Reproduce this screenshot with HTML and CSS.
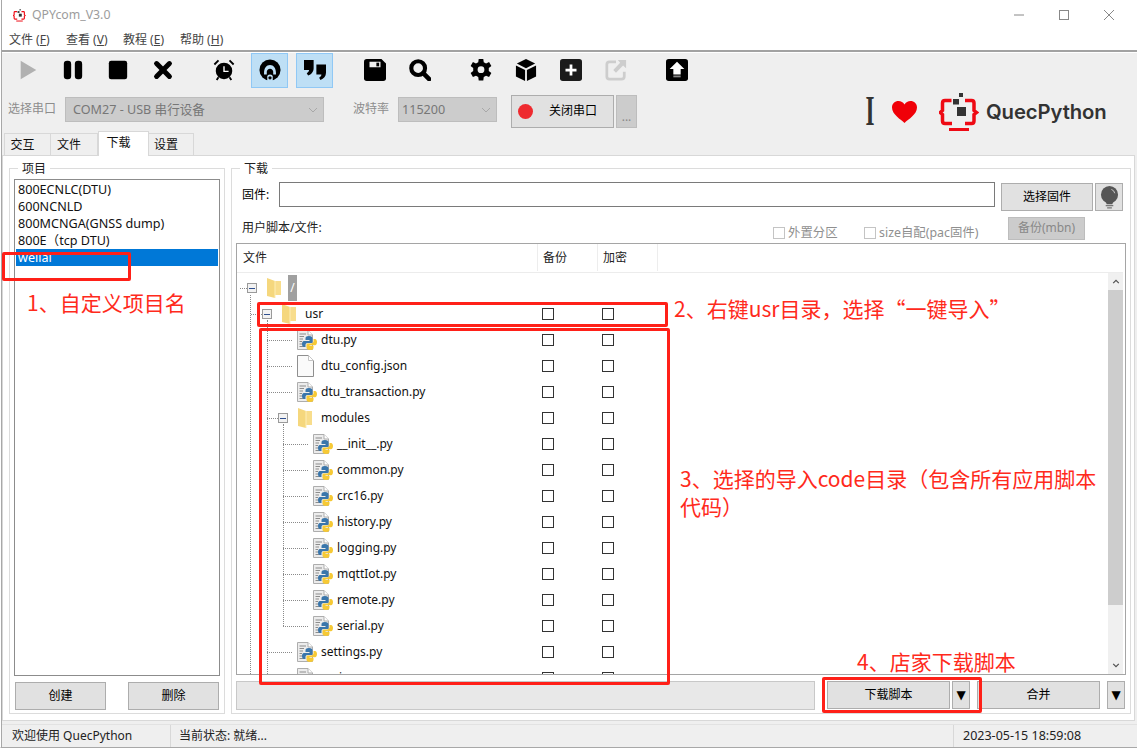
FILE: index.html
```html
<!DOCTYPE html>
<html lang="zh-CN">
<head>
<meta charset="utf-8">
<title>QPYcom_V3.0</title>
<link rel="stylesheet" href="styles.css">
</head>
<body>
<svg class="defs" width="0" height="0" aria-hidden="true">
  <symbol id="qp" viewBox="0 0 40 39">
    <path d="M12.500 7.500H6Q3.500 7.500 3.500 10V17.500L1.200 19.500L3.500 21.500V28Q3.500 30.500 6 30.500H13M26 7.500H32.500Q35 7.500 35 10V17.500L37.500 19.500L35 21.500V28Q35 30.500 32.500 30.500H26" fill="none" stroke="#ee0a14" stroke-width="3.500"/>
    <rect x="10" y="35" width="20" height="3" fill="#ee0a14"/>
    <rect x="14" y="6" width="6" height="5.500" fill="#333"/>
    <rect x="20" y="0" width="4" height="4" fill="#333"/>
    <rect x="18" y="14" width="9" height="9" fill="#333"/>
  </symbol>
  <symbol id="py" viewBox="0 0 20 20">
    <path d="M.5 .5H11L15.500 5V19.500H.5Z" fill="#ececec" stroke="#adadad"/>
    <path d="M11 .5V5H15.500" fill="#fff" stroke="#adadad"/>
    <path d="M2.500 4H9M2.500 6.500H7M2.500 9H6M2.500 11.500H5M2.500 14H5M2.500 16.500H8" stroke="#8c8c8c" stroke-width="1.200"/>
    <path d="M12 6C9 6 8.500 7 8.500 8.500V10H12.500V11H7C5.500 11 5 12.500 5 14C5 15.500 5.500 17 7 17H8.500V15C8.500 13.500 9.500 13 11 13H14C15 13 15.500 12.500 15.500 11.500V8.500C15.500 7 14.500 6 12 6Z" fill="#3a76ab"/>
    <path d="M13 20C16 20 16.500 19 16.500 17.500V16H12.500V15.300H18C19.300 15.300 20 13.500 20 12C20 10.500 19.300 9 18 9H16.500V11C16.500 12.500 15.500 13.500 14 13.500H11C10 13.500 9.500 14 9.500 15V17.500C9.500 19 10.500 20 13 20Z" fill="#f6c935"/>
  </symbol>
  <symbol id="doc" viewBox="0 0 17 22">
    <path d="M.5 .5H11.500L16.500 5.500V21.500H.5Z" fill="#fafafa" stroke="#8f8f8f"/>
    <path d="M11.500 .5V5.500H16.500" fill="#fff" stroke="#c4c4c4"/>
  </symbol>
  <symbol id="folder" viewBox="0 0 14 20">
    <path d="M5 3H14V17H5Z" fill="#f8dd8c"/>
    <path d="M0 0L8 3V20L0 18Z" fill="#f5d77d"/>
    <path d="M8 3V20" stroke="#fdeeb8"/>
  </symbol>
</svg>
<div class="window">
  <header class="titlebar">
    <svg class="title-logo"><use href="#qp"/></svg>
    <span class="title-text">QPYcom_V3.0</span>
    <div class="winctl">
      <svg class="winbtn" viewBox="0 0 12 12"><path d="M1 6H11" stroke="#888" fill="none"/></svg>
      <svg class="winbtn" viewBox="0 0 12 12"><rect x="1.500" y="1.500" width="9" height="9" stroke="#888" fill="none"/></svg>
      <svg class="winbtn" viewBox="0 0 12 12"><path d="M1 1L11 11M11 1L1 11" stroke="#888" fill="none"/></svg>
    </div>
  </header>
  <nav class="menubar">
    <span class="menu">文件 (<u>F</u>)</span>
    <span class="menu">查看 (<u>V</u>)</span>
    <span class="menu">教程 (<u>E</u>)</span>
    <span class="menu">帮助 (<u>H</u>)</span>
  </nav>
  <section class="topbar">
    <div class="tools">
      <span class="tool"><svg class="ico" viewBox="0 0 24 24"><path d="M4 2L21 12L4 22Z" fill="#b1b1b1"/></svg></span>
      <span class="tool"><svg class="ico" viewBox="0 0 24 24"><rect x="2" y="2" width="8" height="20" rx="3.500"/><rect x="14" y="2" width="8" height="20" rx="3.500"/></svg></span>
      <span class="tool"><svg class="ico" viewBox="0 0 24 24"><rect x="2" y="2" width="20" height="20" rx="2.500"/></svg></span>
      <span class="tool"><svg class="ico" viewBox="0 0 24 24"><path d="M5 5L19 19M19 5L5 19" stroke="#000" stroke-width="5.500" stroke-linecap="round"/></svg></span>
      <span class="tool sep"><svg class="ico" viewBox="0 0 24 24"><circle cx="12" cy="13" r="9"/><path d="M12 8V13.500H17" stroke="#fff" stroke-width="1.500" fill="none"/><path d="M1.500 6L6 1.500M22.500 6L18 1.500M6 20L4 23M18 20L20 23" stroke="#000" stroke-width="2"/></svg></span>
      <span class="tool on"><svg class="ico" viewBox="0 0 24 24"><circle cx="12" cy="12" r="11.500"/><path d="M5.500 15C5.500 10 8 6.500 12 6.500C16 6.500 18.500 10 18.500 15V17H15.500V14C15.500 12 14 10.500 12 10.500C10 10.500 8.500 12 8.500 14V17H5.500Z" fill="#bedff5"/><circle cx="12" cy="14" r="2.200"/><path d="M9 24V19Q9 17 12 17Q15 17 15 19V24Z" fill="#bedff5"/><circle cx="12" cy="20.500" r="1.800"/></svg></span>
      <span class="tool on"><svg class="ico" viewBox="0 0 24 24"><path d="M0 1H10.500V10C10.500 14 8 16.500 4.500 18L3 15.500C4.500 14.500 5.500 13.500 5.500 12H0Z"/><path d="M13.500 6H24V15C24 19 21.500 21.500 18 23L16.500 20.500C18 19.500 19 18.500 19 17H13.500Z"/></svg></span>
      <span class="tool sep"><svg class="ico" viewBox="0 0 24 24"><path d="M3 0H19L24 5V21Q24 24 21 24H3Q0 24 0 21V3Q0 0 3 0Z"/><rect x="6" y="3" width="12" height="6" fill="#efefef"/><rect x="13.500" y="4" width="3" height="4"/></svg></span>
      <span class="tool"><svg class="ico" viewBox="0 0 24 24"><circle cx="10" cy="10" r="7.500" fill="none" stroke="#000" stroke-width="4.500"/><path d="M15.500 15.500L22 22" stroke="#000" stroke-width="5" stroke-linecap="round"/></svg></span>
      <span class="tool sep"><svg class="ico" viewBox="0 0 24 24"><path d="M9.500 0H14.500L15 3.500L17.500 4.800L20.800 3.300L23.300 7.700L20.500 9.800V13.200L23.300 15.300L20.800 19.700L17.500 18.200L15 19.500L14.500 23.500H9.500L9 19.500L6.500 18.200L3.200 19.700L.7 15.300L3.500 13.200V9.800L.7 7.700L3.200 3.300L6.500 4.800L9 3.500Z" fill-rule="evenodd"/><circle cx="12" cy="11.700" r="3.700" fill="#efefef"/></svg></span>
      <span class="tool"><svg class="ico" viewBox="0 0 24 24"><path d="M12 0L22 5L12 10L2 5Z"/><path d="M1 7L11 12V24L1 19Z"/><path d="M23 7L13 12V24L23 19Z"/></svg></span>
      <span class="tool"><svg class="ico" viewBox="0 0 24 24"><rect width="24" height="24" rx="3" fill="#1b1b1b"/><path d="M12 6V18M6 12H18" stroke="#fff" stroke-width="3"/></svg></span>
      <span class="tool"><svg class="ico" viewBox="0 0 24 24"><path d="M12 3H5Q2 3 2 6V19Q2 22 5 22H18Q21 22 21 19V14" fill="none" stroke="#cdcdcd" stroke-width="3"/><path d="M14 1H23V10L19.700 7L12 15L9 12L16.500 4Z" fill="#cdcdcd"/></svg></span>
      <span class="tool sep"><svg class="ico" viewBox="0 0 24 24"><rect width="24" height="24" rx="3"/><path d="M12 3L20 11H16V17H8V11H4Z" fill="#fff"/><path d="M8 19H16" stroke="#888" stroke-width="2"/></svg></span>
    </div>
    <div class="serial">
      <span class="muted port-label">选择串口</span>
      <span class="combo combo-port">COM27 - USB 串行设备<svg class="chev" viewBox="0 0 10 6"><path d="M1 1L5 5L9 1" fill="none" stroke="#a8a8a8"/></svg></span>
      <span class="muted baud-label">波特率</span>
      <span class="combo combo-baud">115200<svg class="chev" viewBox="0 0 10 6"><path d="M1 1L5 5L9 1" fill="none" stroke="#a8a8a8"/></svg></span>
      <button class="btn-close"><span class="dot"></span>关闭串口</button>
      <span class="btn-more">...</span>
      <div class="brand">
        <span class="brand-i">I</span>
        <svg class="heart" viewBox="0 0 25 22"><path d="M12.500 22C9 18.500 0 13.500 0 6.500C0 2.500 3 0 6.500 0C9 0 11.300 1.300 12.500 3.500C13.700 1.300 16 0 18.500 0C22 0 25 2.500 25 6.500C25 13.500 16 18.500 12.500 22Z" fill="#f00008"/></svg>
        <svg class="brand-logo"><use href="#qp"/></svg>
        <span class="brand-name">QuecPython</span>
      </div>
    </div>
    <div class="tabs">
      <span class="tab t1">交互</span>
      <span class="tab t2">文件</span>
      <span class="tab t3 active">下载</span>
      <span class="tab t4">设置</span>
    </div>
  </section>
  <main class="pane">
    <section class="group group-project">
      <span class="legend">项目</span>
      <ul class="plist">
        <li>800ECNLC(DTU)</li>
        <li>600NCNLD</li>
        <li>800MCNGA(GNSS dump)</li>
        <li>800E（tcp DTU)</li>
        <li class="sel">weilai</li>
      </ul>
      <div class="pbtns">
        <button class="btn pbtn">创建</button>
        <button class="btn pbtn">删除</button>
      </div>
    </section>
    <section class="group group-download">
      <span class="legend">下载</span>
      <div class="fw-row">
        <label class="fw-label">固件:</label>
        <span class="fw-input"></span>
        <button class="btn fw-btn">选择固件</button>
        <span class="btn bulb"><svg class="bulb-ico" viewBox="0 0 20 24"><circle cx="10" cy="9" r="9" fill="#565656"/><path d="M6 16H14L13 19H7Z" fill="#565656"/><path d="M6 20.500H14M7.500 23H12.500" stroke="#777" stroke-width="1.300"/><path d="M12 3.500Q15 4.500 15.500 7.500" stroke="#ccc" fill="none"/></svg></span>
      </div>
      <div class="opt-row">
        <span class="opt-label">用户脚本/文件:</span>
        <span class="opt opt-a"><i class="optbox"></i>外置分区</span>
        <span class="opt opt-b"><i class="optbox"></i>size自配(pac固件)</span>
        <span class="btn-bak">备份(mbn)</span>
      </div>
      <div class="tree">
        <div class="tree-head">
          <span class="th th-name">文件</span><span class="th th-c">备份</span><span class="th th-c">加密</span>
        </div>
        <div class="tree-main">
          <div class="rows">
            <i class="vline v1"></i><i class="vline v2"></i><i class="vline v3"></i>
            <div class="row d0"><span class="cell"><i class="hl"></i><i class="box"></i><svg class="fo"><use href="#folder"/></svg><span class="rootsel">/</span></span></div>
            <div class="row d1"><span class="cell"><i class="hl"></i><i class="box"></i><svg class="fo"><use href="#folder"/></svg><span class="nm">usr</span></span><i class="cb"></i><i class="cb"></i></div>
            <div class="row d2"><span class="cell"><i class="hl"></i><svg class="pi"><use href="#py"/></svg><span class="nm">dtu.py</span></span><i class="cb"></i><i class="cb"></i></div>
            <div class="row d2"><span class="cell"><i class="hl"></i><svg class="pd"><use href="#doc"/></svg><span class="nm">dtu_config.json</span></span><i class="cb"></i><i class="cb"></i></div>
            <div class="row d2"><span class="cell"><i class="hl"></i><svg class="pi"><use href="#py"/></svg><span class="nm">dtu_transaction.py</span></span><i class="cb"></i><i class="cb"></i></div>
            <div class="row dm"><span class="cell"><i class="hl"></i><i class="box"></i><svg class="fo"><use href="#folder"/></svg><span class="nm">modules</span></span><i class="cb"></i><i class="cb"></i></div>
            <div class="row d3"><span class="cell"><i class="hl"></i><svg class="pi"><use href="#py"/></svg><span class="nm">__init__.py</span></span><i class="cb"></i><i class="cb"></i></div>
            <div class="row d3"><span class="cell"><i class="hl"></i><svg class="pi"><use href="#py"/></svg><span class="nm">common.py</span></span><i class="cb"></i><i class="cb"></i></div>
            <div class="row d3"><span class="cell"><i class="hl"></i><svg class="pi"><use href="#py"/></svg><span class="nm">crc16.py</span></span><i class="cb"></i><i class="cb"></i></div>
            <div class="row d3"><span class="cell"><i class="hl"></i><svg class="pi"><use href="#py"/></svg><span class="nm">history.py</span></span><i class="cb"></i><i class="cb"></i></div>
            <div class="row d3"><span class="cell"><i class="hl"></i><svg class="pi"><use href="#py"/></svg><span class="nm">logging.py</span></span><i class="cb"></i><i class="cb"></i></div>
            <div class="row d3"><span class="cell"><i class="hl"></i><svg class="pi"><use href="#py"/></svg><span class="nm">mqttIot.py</span></span><i class="cb"></i><i class="cb"></i></div>
            <div class="row d3"><span class="cell"><i class="hl"></i><svg class="pi"><use href="#py"/></svg><span class="nm">remote.py</span></span><i class="cb"></i><i class="cb"></i></div>
            <div class="row d3"><span class="cell"><i class="hl"></i><svg class="pi"><use href="#py"/></svg><span class="nm">serial.py</span></span><i class="cb"></i><i class="cb"></i></div>
            <div class="row d2"><span class="cell"><i class="hl"></i><svg class="pi"><use href="#py"/></svg><span class="nm">settings.py</span></span><i class="cb"></i><i class="cb"></i></div>
            <div class="row d2"><span class="cell"><i class="hl"></i><svg class="pi"><use href="#py"/></svg><span class="nm">main.py</span></span><i class="cb"></i><i class="cb"></i></div>
          </div>
          <div class="scroll">
            <svg class="sarrow" viewBox="0 0 10 6"><path d="M1.500 5L5 1.500L8.500 5" fill="none" stroke="#505050" stroke-width="1.500"/></svg>
            <span class="thumb"></span>
            <svg class="sarrow sdown" viewBox="0 0 10 6"><path d="M1.500 1L5 4.500L8.500 1" fill="none" stroke="#505050" stroke-width="1.500"/></svg>
          </div>
        </div>
      </div>
      <div class="act-row">
        <span class="progress"></span>
        <button class="btn act">下载脚本</button>
        <span class="btn drop">▼</span>
        <button class="btn act merge">合并</button>
        <span class="btn drop drop2">▼</span>
      </div>
    </section>
  </main>
  <footer class="status">
    <span class="st st1">欢迎使用 QuecPython</span>
    <span class="st st2">当前状态: 就绪...</span>
    <span class="st st3">2023-05-15 18:59:08</span>
  </footer>
  <i class="mark m1"></i>
  <i class="mark m2"></i>
  <i class="mark m3"></i>
  <i class="mark m4"></i>
  <span class="note n1">1、自定义项目名</span>
  <span class="note n2">2、右键usr目录，选择“一键导入”</span>
  <span class="note n3">3、选择的导入code目录（包含所有应用脚本<br>代码）</span>
  <span class="note n4">4、店家下载脚本</span>
</div>
</body>
</html>
```
FILE: styles.css
```css
* { box-sizing: border-box; }
html, body { margin: 0; padding: 0; }
body { width: 1137px; height: 748px; overflow: hidden; background: #fff; font: 12px/1.2 "Noto Sans", "Noto Sans CJK SC", sans-serif; color: #000; }
.defs { position: absolute; }
button { font: inherit; color: inherit; padding: 0; }

.window { position: relative; width: 1137px; height: 748px; margin: 0; border-left: 1px solid #fff; display: flex; flex-direction: column; border-bottom: 1px solid #a8a8a8; background: #efefef; overflow: hidden; box-shadow: inset 1px 0 0 #a8a8a8; }

.titlebar { height: 30px; background: #fff; display: flex; align-items: center; padding-left: 11px; margin-left: 1px; flex: none; }
.title-logo { width: 13px; height: 13px; }
.title-text { margin-left: 6px; color: #9c9c9c; font-size: 12.300px; }
.winctl { margin-left: auto; display: flex; gap: 33px; padding-right: 22px; }
.winbtn { width: 12px; height: 12px; display: block; }

.menubar { height: 22px; background: #fff; margin-left: 1px; border-bottom: 2px solid #a2a2a2; display: flex; padding-left: 7px; gap: 14px; flex: none; }
.menu { color: #444; line-height: 20px; white-space: nowrap; width: 43px; }

.topbar { height: 103px; flex: none; margin-left: 1px; position: relative; display: flex; flex-direction: column; border-top: 1px solid #fff; }
.tools { display: flex; height: 35px; padding-left: 7px; gap: 8px; flex: none; }
.tool { width: 37px; height: 35px; display: flex; align-items: center; justify-content: center; border: 1px solid transparent; flex: none; padding-bottom: 1px; }
.tool.sep { margin-left: 16px; }
.tool.on { background: #bedff5; border-color: #90c8f5; transform: translateX(1px); }
.ico { width: 22px; height: 22px; display: block; }

.serial { display: flex; align-items: center; height: 40px; margin-top: 4px; padding-left: 6px; flex: none; }
.muted { color: #8d8d8d; white-space: nowrap; margin-top: -5px; }
.port-label { width: 57px; }
.combo { height: 25px; margin-top: -5px; background: #ccc; border: 1px solid #bdbdbd; color: #777; display: flex; align-items: center; padding-left: 7px; position: relative; font-size: 12.600px; }
.combo-port { width: 259px; }
.baud-label { margin-left: 29px; width: 45px; }
.combo-baud { width: 99px; padding-left: 3px; }
.chev { width: 10px; height: 6px; position: absolute; right: 5px; top: 9px; }
.btn-close { width: 103px; height: 33px; margin-left: 14px; margin-top: -2px; background: #e1e1e1; border: 1px solid #adadad; display: flex; align-items: center; padding-left: 6px; gap: 16px; }
.dot { width: 15px; height: 15px; border-radius: 50%; background: #ee2a2f; flex: none; }
.btn-more { width: 21px; height: 33px; margin-left: 2px; margin-top: -2px; background: #ccc; border: 1px solid #bdbdbd; color: #888; text-align: center; padding-top: 14px; }
.brand { margin-left: auto; display: flex; align-items: center; width: 271px; flex: none; height: 40px; }
.brand-i { font: bold 42px/40px "Liberation Serif", serif; color: #333; width: 8px; display: flex; justify-content: center; transform: scaleX(.55); margin-top: -3px; }
.heart { width: 25px; height: 22px; margin-left: 18px; }
.brand-logo { width: 40px; height: 39px; margin-left: 22px; }
.brand-name { font: 600 20.300px/40px Inter, "Noto Sans", sans-serif; color: #333; margin-left: 7px; white-space: nowrap; letter-spacing: -.1px; }

.tabs { display: flex; align-items: flex-end; padding-left: 2px; height: 24px; margin-top: -1px; flex: none; }
.tab { height: 22px; line-height: 22px; text-align: center; border: 1px solid #d8d8d8; border-bottom: 0; border-left: 0; color: #111; padding-right: 10px; }
.t1 { width: 47px; border-left: 1px solid #d8d8d8; }
.t2 { width: 47px; }
.t3 { width: 51px; }
.t4 { width: 45px; }
.tab.active { height: 25px; background: #fff; margin-bottom: -1px; border-left: 1px solid #d8d8d8; position: relative; line-height: 22px; }

.pane { width: 1133px; height: 566px; margin-left: 1px; flex: none; background: #fff; border: 1px solid #d8d8d8; display: flex; padding: 12px 3px 6px 6px; gap: 6px; }
.group { border: 1px solid #dcdcdc; position: relative; display: flex; flex-direction: column; }
.legend { position: absolute; left: 8px; top: -7px; background: #fff; padding: 0 4px; line-height: 14px; color: #222; }
.group-project { width: 216px; flex: none; padding: 10px 4px 3px; }
.plist { flex: 1; margin: 0; padding: 1px 1px; list-style: none; border: 1px solid #8c8c8c; min-height: 0; }
.plist li { height: 17px; line-height: 17px; padding-left: 2px; white-space: nowrap; color: #111; font-size: 12.600px; }
.plist li.sel { background: #0078d7; color: #fff; }
.pbtns { display: flex; justify-content: space-between; margin: 6px 1px 0; }
.btn { background: #e1e1e1; border: 1px solid #adadad; display: flex; align-items: center; justify-content: center; }
.pbtn { width: 91px; height: 28px; }

.group-download { flex: 1; padding: 13px 4px 3px; min-width: 0; }
.fw-row { display: flex; align-items: flex-start; height: 29px; flex: none; padding-left: 6px; }
.fw-label { width: 37px; line-height: 25px; }
.fw-input { width: 716px; height: 25px; border: 1px solid #7a7a7a; background: #fff; }
.fw-btn { width: 92px; height: 28px; margin-left: 6px; margin-top: 1px; }
.bulb { width: 28px; height: 28px; margin-left: 2px; margin-top: 1px; }
.bulb-ico { width: 19px; height: 23px; }

.opt-row { display: flex; height: 32px; flex: none; padding-left: 6px; align-items: flex-start; }
.opt-label { width: 531px; margin-top: 10px; color: #222; white-space: nowrap; }
.opt { display: flex; align-items: center; color: #8f8f8f; white-space: nowrap; margin-top: 15px; gap: 3px; font-size: 12.400px; }
.opt-a { width: 91px; }
.opt-b { width: 144px; }
.optbox { width: 12px; height: 12px; border: 1px solid #c4c4c4; background: #fff; display: block; flex: none; }
.btn-bak { width: 77px; height: 23px; margin-top: 6px; background: #ccc; border: 1px solid #bdbdbd; color: #888; display: flex; align-items: center; justify-content: center; }

.tree { flex: 1; min-height: 0; border: 1px solid #a5a5a5; display: flex; flex-direction: column; }
.tree-head { height: 29px; border-bottom: 1px solid #ececec; display: flex; flex: none; margin-right: 2px; }
.th { height: 27px; line-height: 27px; border-right: 1px solid #ededed; padding-left: 6px; color: #222; }
.th-name { width: 301px; }
.th-c { width: 60px; padding-left: 5px; }
.tree-main { flex: 1; min-height: 0; display: flex; }
.rows { flex: 1; position: relative; overflow: hidden; padding-top: 2px; }
.row { height: 26px; display: flex; align-items: center; }
.cell { width: 301px; height: 26px; display: flex; align-items: center; flex: none; }
.cb { width: 12px; height: 12px; border: 1px solid #333; background: #fff; display: block; flex: none; margin-left: 4px; margin-right: 44px; position: relative; top: -.5px; }
.hl { display: block; height: 0; border-top: 1px dotted #8a8a8a; flex: none; }
.box { width: 10px; height: 10px; border: 1px solid #9a9a9a; flex: none; background: linear-gradient(#2f4f8f, #2f4f8f) center / 6px 1px no-repeat, #f2f2f2; }
.fo { width: 14px; height: 20px; flex: none; margin-left: 10px; }
.pi { width: 20px; height: 20px; flex: none; margin-left: 5px; }
.pd { width: 17px; height: 22px; flex: none; margin-left: 5px; margin-right: 3px; }
.nm { margin-left: 4px; white-space: nowrap; color: #111; }
.fo + .nm { margin-left: 9px; }
.d0 .cell { padding-left: 3px; }
.d0 .hl { width: 7px; }
.d1 .cell { padding-left: 14px; }
.d1 .hl { width: 11px; }
.d2 .cell { padding-left: 30px; }
.d2 .hl { width: 25px; }
.dm .cell { padding-left: 30px; }
.dm .hl { width: 11px; }
.d3 .cell { padding-left: 46px; }
.d3 .hl { width: 25px; }
.rootsel { width: 9px; height: 26px; margin-left: 7px; background: #a0a0a0; color: #fff; text-align: center; line-height: 26px; }
.vline { position: absolute; width: 0; border-left: 1px dotted #8a8a8a; display: block; }
.v1 { left: 13px; top: 22px; bottom: 0; }
.v2 { left: 30px; top: 47px; bottom: 0; }
.v3 { left: 46px; top: 151px; height: 202px; }
.scroll { width: 15px; margin-right: 2px; background: #f0f0f0; flex: none; position: relative; }
.sarrow { width: 8px; height: 5px; position: absolute; left: 4px; top: 6px; }
.sdown { top: auto; bottom: 6px; }
.thumb { position: absolute; left: 0; right: 0; top: 17px; height: 315px; background: #cdcdcd; }

.act-row { display: flex; height: 29px; margin-top: 6px; flex: none; }
.progress { width: 579px; height: 29px; background: #e8e8e8; border: 1px solid #c8c8c8; }
.act { width: 123px; height: 28px; margin-left: 12px; }
.drop { width: 18px; height: 28px; margin-left: 2px; font-family: "DejaVu Sans", sans-serif; font-size: 12px; }
.merge { margin-left: 7px; }
.drop2 { margin-left: 7px; }

.status { height: 24px; margin-top: 3px; margin-left: 1px; flex: none; display: flex; align-items: flex-start; border-top: 1px solid #e2e2e2; }
.st { height: 22px; line-height: 21px; white-space: nowrap; color: #222; }
.st1 { width: 169px; padding-left: 10px; border-right: 1px solid #d8d8d8; }
.st2 { width: 783px; padding-left: 8px; border-right: 1px solid #d8d8d8; }
.st3 { padding-left: 9px; font-size: 12.500px; }

.mark { position: absolute; display: block; border: 3px solid #ff2018; border-radius: 2px; }
.m1 { left: 1px; top: 252px; width: 129px; height: 29px; }
.m2 { left: 256px; top: 302px; width: 411px; height: 25px; }
.m3 { left: 258px; top: 328px; width: 411px; height: 357px; }
.m4 { left: 821px; top: 677px; width: 160px; height: 36px; }
.note { position: absolute; color: #ff2a1c; font: 21px/28px "Noto Sans CJK SC", "Noto Sans", sans-serif; white-space: nowrap; }
.n1 { left: 26px; top: 288px; }
.n2 { left: 673px; top: 294px; }
.n3 { left: 679px; top: 464px; }
.n4 { left: 856px; top: 647px; }
```
